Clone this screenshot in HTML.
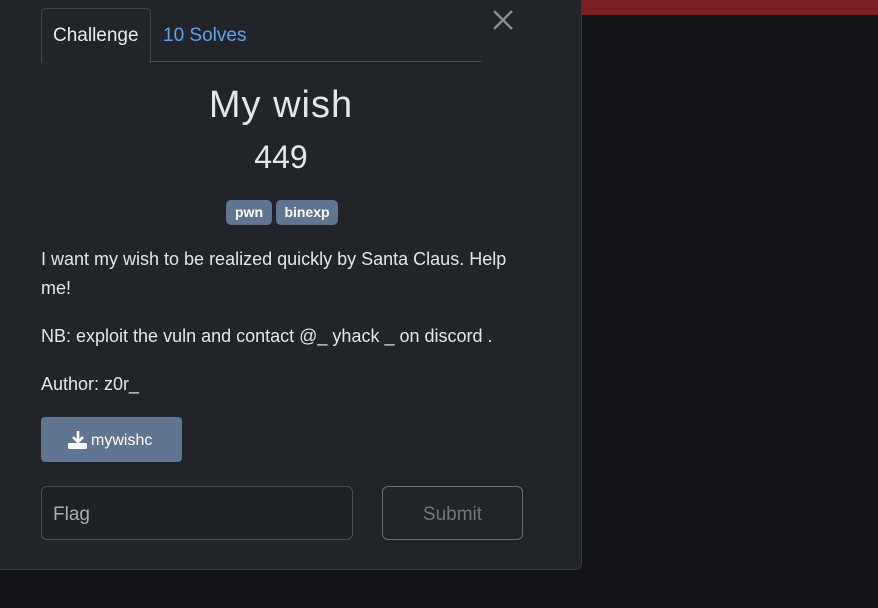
<!DOCTYPE html>
<html><head><style>
body{margin:0;width:878px;height:608px;background:#121316;position:relative;overflow:hidden;font-family:"Liberation Sans",sans-serif;}
.red{position:absolute;left:581px;top:0;width:297px;height:15px;background:#7a1f22;}
.modal{position:absolute;left:-10px;top:-10px;width:590px;height:578px;background:#212429;border:1px solid #34373c;border-radius:6px;}
.t{position:absolute;white-space:nowrap;}
.tab{position:absolute;left:41px;top:8px;width:108px;height:54px;border:1px solid #42464c;border-bottom:none;border-radius:5px 5px 0 0;background:#212429;}
.line{position:absolute;left:149px;top:61px;width:332px;height:1px;background:#4a4e54;}
.badge{position:absolute;top:200px;height:25px;background:#5f7592;border-radius:5px;color:#fff;font-weight:bold;font-size:14px;line-height:25px;text-align:center;}
</style></head><body>
<div class="red"></div>
<div class="modal"></div>
<div class="tab"></div>
<div class="line"></div>
<div class="t" style="left:53px;top:25px;font-size:19px;color:#e8eaed">Challenge</div>
<div class="t" style="left:163px;top:25px;font-size:19px;color:#5fa0ef">10 Solves</div>
<svg style="position:absolute;left:492px;top:9px" width="22" height="22"><path d="M2 2L20 20M20 2L2 20" stroke="#8a8d91" stroke-width="2.4"/></svg>
<div class="t" style="left:0;width:562px;text-align:center;top:84px;font-size:38px;color:#e4e6e9;letter-spacing:1px">My wish</div>
<div class="t" style="left:0;width:562px;text-align:center;top:139px;font-size:32px;color:#e4e6e9">449</div>
<div class="badge" style="left:226px;width:46px">pwn</div>
<div class="badge" style="left:276px;width:62px">binexp</div>
<div class="t" style="left:41px;top:245px;width:500px;white-space:normal;font-size:18px;line-height:29px;color:#e4e6e9">I want my wish to be realized quickly by Santa Claus. Help me!</div>
<div class="t" style="left:41px;top:326px;font-size:18px;color:#e4e6e9">NB: exploit the vuln and contact @_ yhack _ on discord .</div>
<div class="t" style="left:41px;top:374px;font-size:18px;color:#e4e6e9">Author: z0r_</div>
<div style="position:absolute;left:41px;top:417px;width:141px;height:45px;background:#5f7592;border-radius:4px"></div>
<svg style="position:absolute;left:67px;top:430px" width="22" height="20" viewBox="0 0 22 20"><path d="M11 1v11M6 7l5 5 5-5" stroke="#fff" stroke-width="2.6" fill="none"/><rect x="1" y="13" width="19" height="6" rx="1.5" fill="#fff"/></svg>
<div class="t" style="left:91px;top:432px;font-size:16px;color:#fff">mywishc</div>
<div style="position:absolute;left:41px;top:486px;width:310px;height:52px;border:1px solid #4a4e54;border-radius:6px;background:#1e2126"></div>
<div class="t" style="left:53px;top:504px;font-size:19px;color:#a9abae">Flag</div>
<div style="position:absolute;left:382px;top:486px;width:139px;height:52px;border:1px solid #6a6e74;border-radius:6px"></div>
<div class="t" style="left:382px;width:141px;text-align:center;top:504px;font-size:19px;color:#72767b">Submit</div>
</body></html>
